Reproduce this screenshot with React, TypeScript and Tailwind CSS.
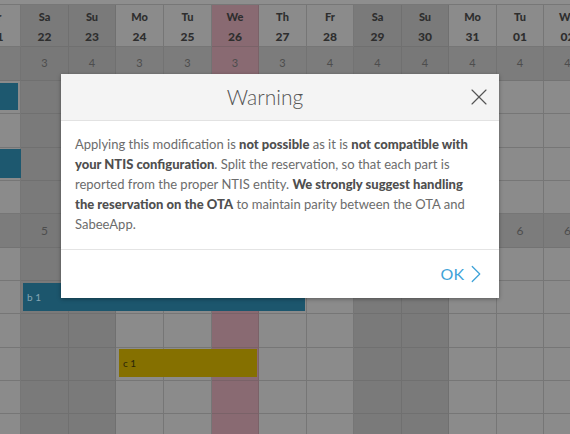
import { X, ChevronRight } from "lucide-react";

type Col = { day: string; num: string; kind: "n" | "we" | "today"; count: string; cat?: string };

const COLS: Col[] = [
  { day: "Fr", num: "21", kind: "n", count: "" },
  { day: "Sa", num: "22", kind: "we", count: "3", cat: "5" },
  { day: "Su", num: "23", kind: "we", count: "4" },
  { day: "Mo", num: "24", kind: "n", count: "3" },
  { day: "Tu", num: "25", kind: "n", count: "3" },
  { day: "We", num: "26", kind: "today", count: "3" },
  { day: "Th", num: "27", kind: "n", count: "3" },
  { day: "Fr", num: "28", kind: "n", count: "4" },
  { day: "Sa", num: "29", kind: "we", count: "4" },
  { day: "Su", num: "30", kind: "we", count: "4" },
  { day: "Mo", num: "31", kind: "n", count: "4" },
  { day: "Tu", num: "01", kind: "n", count: "4", cat: "6" },
  { day: "We", num: "02", kind: "n", count: "4", cat: "6" },
];

// row kinds: strip, header, category, plain
const ROWS = ["strip", "head", "cat", "plain", "plain", "plain", "plain", "cat", "plain", "plain", "plain", "plain", "plain", "plain"];

function cellBg(kind: Col["kind"], row: string) {
  if (kind === "today") return "bg-[#896a72] border-[#7a6268]";
  if (row === "cat") return kind === "we" ? "bg-[#787878] border-[#707070]" : "bg-[#7c7c7c] border-[#737373]";
  if (kind === "we") return "bg-[#7a7a7a] border-[#707070]";
  return "bg-[#8b8b8b] border-[#767676]";
}

function Bar({ r, c }: { r: number; c: number }) {
  if (r === 3 && c === 0)
    return <div className="absolute top-[2px] left-[20px] w-[25px] h-[27px] bg-[#1d586f]" />;
  if (r === 5 && c === 0)
    return <div className="absolute top-[1px] left-0 w-[330px] h-[29px] bg-[#1d586f]" />;
  if (r === 9 && c === 1)
    return (
      <div className="absolute top-[2px] left-[2px] w-[282px] h-[28px] bg-[#1c566d] flex items-center pl-[4px] text-[10px] text-[#86a6b4] z-10">
        b 1
      </div>
    );
  if (r === 11 && c === 3)
    return (
      <div className="absolute top-[1px] left-[3px] w-[138px] h-[28px] bg-[#857000] flex items-center pl-[4px] text-[10px] text-[#2b2608] z-10">
        c 1
      </div>
    );
  return null;
}

export default function App() {
  return (
    <div
      className="relative w-[570px] h-[434px] overflow-hidden bg-[#8b8b8b]"
      style={{ fontFamily: "Lato, 'Liberation Sans', sans-serif" }}
    >
      {/* ── Calendar grid (dimmed) ── */}
      <div className="-ml-[27px] grid grid-cols-[48px_48px_47px_48px_48px_47px_48px_47px_48px_47px_48px_47px_48px] grid-rows-[5px_42px_34px_33px_34px_33px_33px_34px_33px_33px_34px_33px_33px_34px] w-[617px]">
        {ROWS.map((row, r) =>
          COLS.map((col, c) => {
            const base = "relative border-r border-b " + cellBg(col.kind, row);
            if (row === "strip") return <div key={`${r}-${c}`} className="border-b border-[#777] bg-[#8e8e8e]" />;
            if (row === "head")
              return (
                <div key={`${r}-${c}`} className={base + " flex flex-col items-center pt-[3px] text-[#2e2e2e] font-black"}>
                  <span className="text-[11px] leading-[18px]">{col.day}</span>
                  <span className="text-[12px] leading-[22px]">{col.num}</span>
                </div>
              );
            if (row === "cat")
              return (
                <div key={`${r}-${c}`} className={base + " flex items-center justify-center text-[#4d4d4d]"}>
                  <span className={r === 2 ? "text-[11px]" : "text-[12px]"}>{r === 2 ? col.count : col.cat}</span>
                </div>
              );
            return (
              <div key={`${r}-${c}`} className={base}>
                <Bar r={r} c={c} />
              </div>
            );
          })
        )}
      </div>

      {/* ── Warning modal ── */}
      <div className="absolute left-[61px] top-[74px] w-[438px] bg-white shadow-[0_1px_4px_rgba(0,0,0,0.35)] z-20">
        <div className="flex items-center h-[47px] bg-[#f4f4f4] border-b border-[#e2e2e2]">
          <div className="flex-1 text-center text-[21px] font-light text-[#555] pl-[2px]">Warning</div>
          <button className="w-[34px] h-full flex items-center justify-start -ml-[2px] text-[#555]">
            <X size={28} strokeWidth={1} />
          </button>
        </div>
        <div className="px-[14px] pt-[13px] pb-[15px] text-[13px] leading-[20px] text-[#6c6c6c] border-b border-[#e4e4e4]">
          Applying this modification is <b className="font-black text-[#4f4f4f]">not possible</b> as it is{" "}
          <b className="font-black text-[#4f4f4f]">not compatible with your NTIS configuration</b>. Split the
          reservation, so that each part is reported from the proper NTIS entity.{" "}
          <b className="font-black text-[#4f4f4f]">We strongly suggest handling the reservation on the OTA</b> to
          maintain parity between the OTA and SabeeApp.
        </div>
        <div className="flex justify-end items-center h-[48px] pr-[8px]">
          <button className="flex items-center text-[16px] text-[#3fa3d8]">
            OK
            <ChevronRight size={30} strokeWidth={1} className="-ml-[3px]" />
          </button>
        </div>
      </div>
    </div>
  );
}
